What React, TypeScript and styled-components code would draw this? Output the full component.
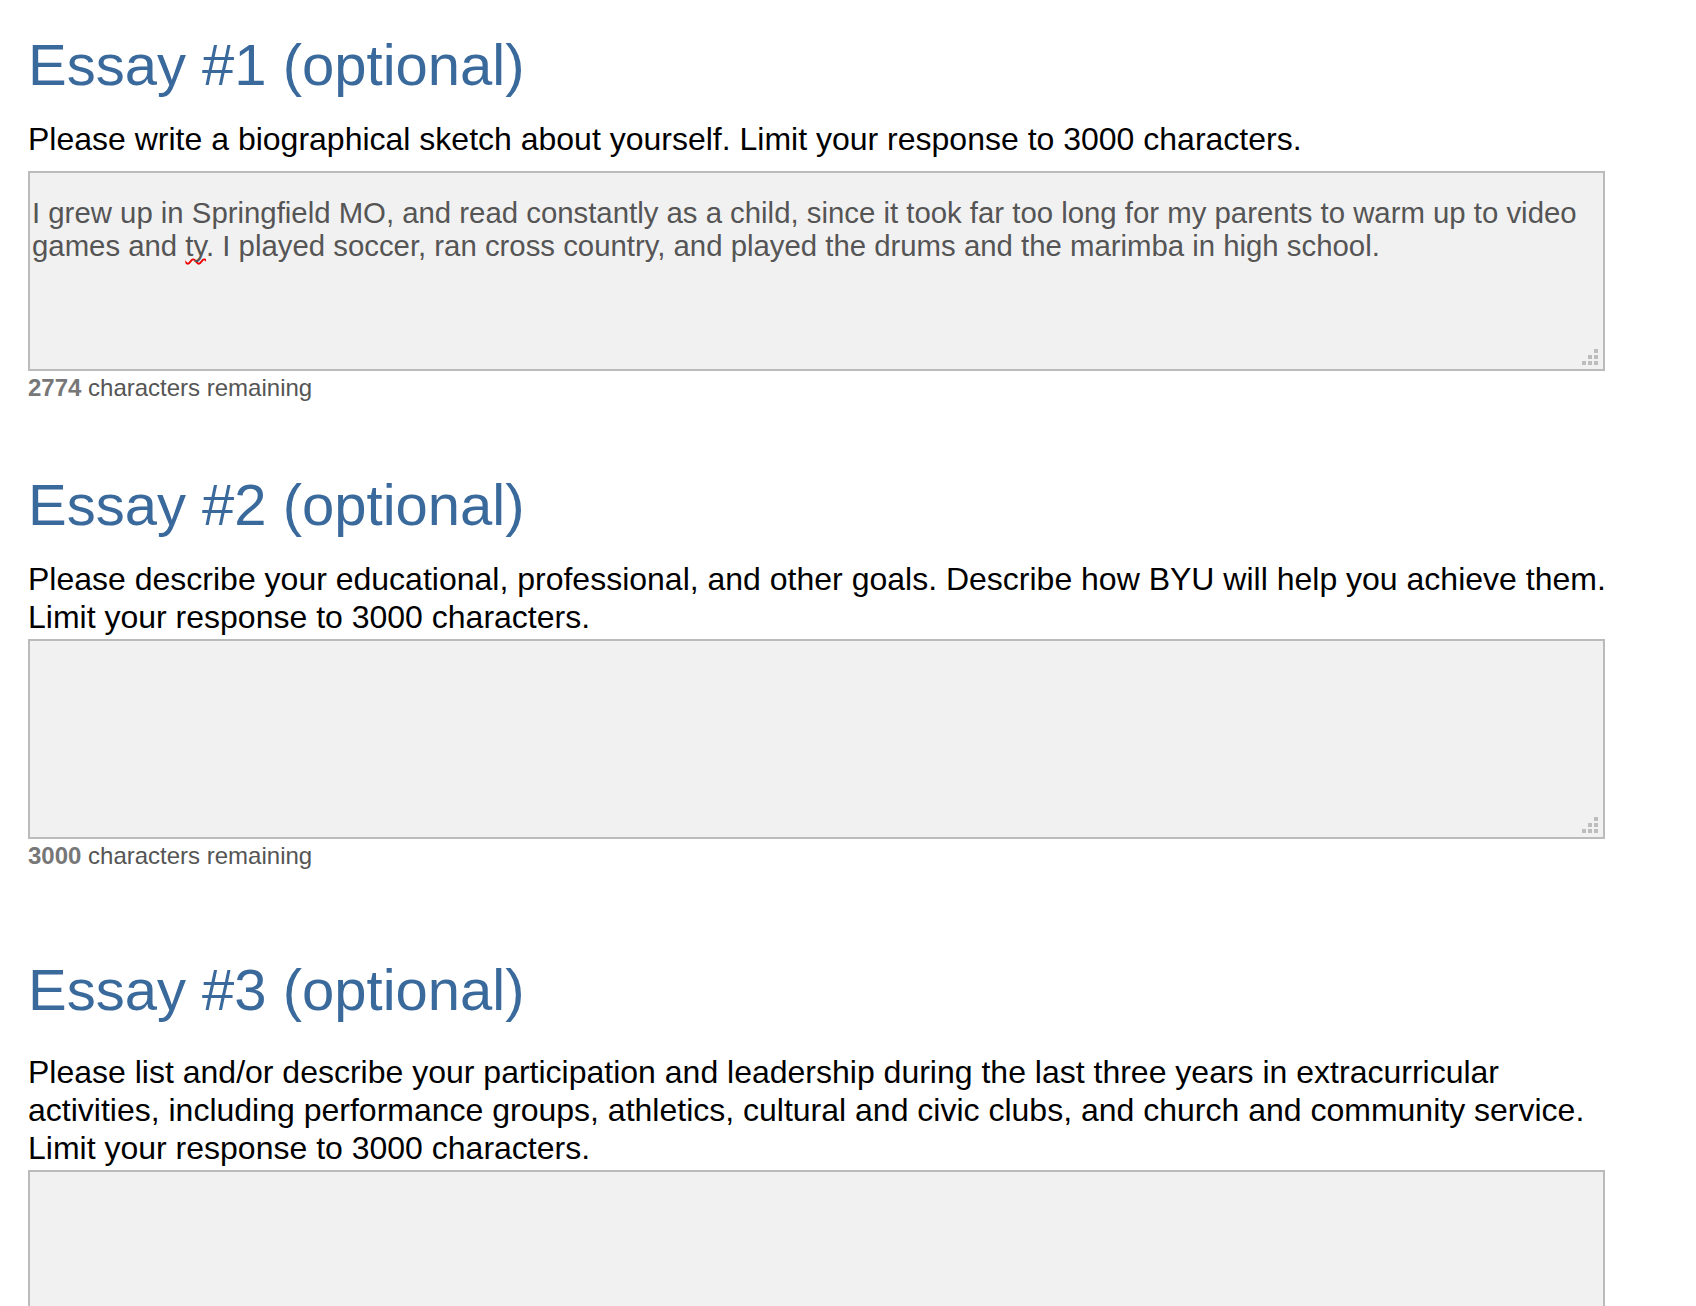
import React from "react";
import styled, { createGlobalStyle } from "styled-components";

const GlobalStyle = createGlobalStyle`
  html, body {
    margin: 0;
    padding: 0;
    background: #ffffff;
    overflow: hidden;
  }
  body {
    font-family: "Liberation Sans", Arial, Helvetica, sans-serif;
  }
`;

const Page = styled.main`
  display: flex;
  flex-direction: column;
  width: 1592px;
  padding: 32px 0 0 28px;
`;

const Section = styled.section<{ $top: number }>`
  display: flex;
  flex-direction: column;
  margin-top: ${(p) => p.$top}px;
`;

const Heading = styled.h2`
  margin: 0;
  font-size: 58px;
  line-height: 66px;
  font-weight: 400;
  color: #3a699c;
`;

const Prompt = styled.p<{ $above: number; $below: number }>`
  margin: ${(p) => p.$above}px 0 ${(p) => p.$below}px;
  font-size: 32px;
  line-height: 37.8px;
  color: #000000;
`;

const Box = styled.div`
  position: relative;
  box-sizing: border-box;
  width: 1577px;
  height: 200px;
  border: 2px solid #bbbbbb;
  background: #f1f1f1;
  padding: 23px 4px 0 2px;
  font-size: 29.35px;
  line-height: 33.6px;
  color: #555555;
`;

const Misspelled = styled.span`
  text-decoration-line: underline;
  text-decoration-style: wavy;
  text-decoration-color: #ee0000;
  text-decoration-thickness: 2px;
  text-decoration-skip-ink: none;
  text-underline-offset: 2px;
`;

const Grip = styled.svg`
  position: absolute;
  right: 5px;
  bottom: 4px;
  width: 16px;
  height: 16px;
`;

const Counter = styled.div`
  margin-top: 4.8px;
  font-size: 24px;
  line-height: 26px;
  color: #555555;
`;

const Count = styled.strong`
  font-weight: 700;
  color: #777777;
`;

const ResizeGrip = () => (
  <Grip viewBox="0 0 16 16" aria-hidden="true">
    <g fill="#bdbdbd">
      <rect x="12" y="0" width="4" height="4" />
      <rect x="6" y="6" width="4" height="4" />
      <rect x="12" y="6" width="4" height="4" />
      <rect x="0" y="12" width="4" height="4" />
      <rect x="6" y="12" width="4" height="4" />
      <rect x="12" y="12" width="4" height="4" />
    </g>
  </Grip>
);

type EssayProps = {
  title: string;
  prompt: string;
  remaining: number;
  top: number;
  above: number;
  below: number;
  children?: React.ReactNode;
};

const Essay = ({ title, prompt, remaining, top, above, below, children }: EssayProps) => (
  <Section $top={top}>
    <Heading>{title}</Heading>
    <Prompt $above={above} $below={below}>
      {prompt}
    </Prompt>
    <Box role="textbox" aria-multiline="true">
      {children}
      <ResizeGrip />
    </Box>
    <Counter>
      <Count>{remaining}</Count> characters remaining
    </Counter>
  </Section>
);

export default function App() {
  return (
    <>
      <GlobalStyle />
      <Page>
        <Essay
          title="Essay #1 (optional)"
          prompt="Please write a biographical sketch about yourself. Limit your response to 3000 characters."
          remaining={2774}
          top={0}
          above={22.5}
          below={12.4}
        >
          I grew up in Springfield MO, and read constantly as a child, since it took far too long for my
          parents to warm up to video games and <Misspelled>ty</Misspelled>. I played soccer, ran cross
          country, and played the drums and the marimba in high school.
        </Essay>
        <Essay
          title="Essay #2 (optional)"
          prompt="Please describe your educational, professional, and other goals. Describe how BYU will help you achieve them. Limit your response to 3000 characters."
          remaining={3000}
          top={70.5}
          above={23.5}
          below={1.6}
        />
        <Essay
          title="Essay #3 (optional)"
          prompt="Please list and/or describe your participation and leadership during the last three years in extracurricular activities, including performance groups, athletics, cultural and civic clubs, and church and community service. Limit your response to 3000 characters."
          remaining={3000}
          top={87.5}
          above={31.2}
          below={2.4}
        />
      </Page>
    </>
  );
}
